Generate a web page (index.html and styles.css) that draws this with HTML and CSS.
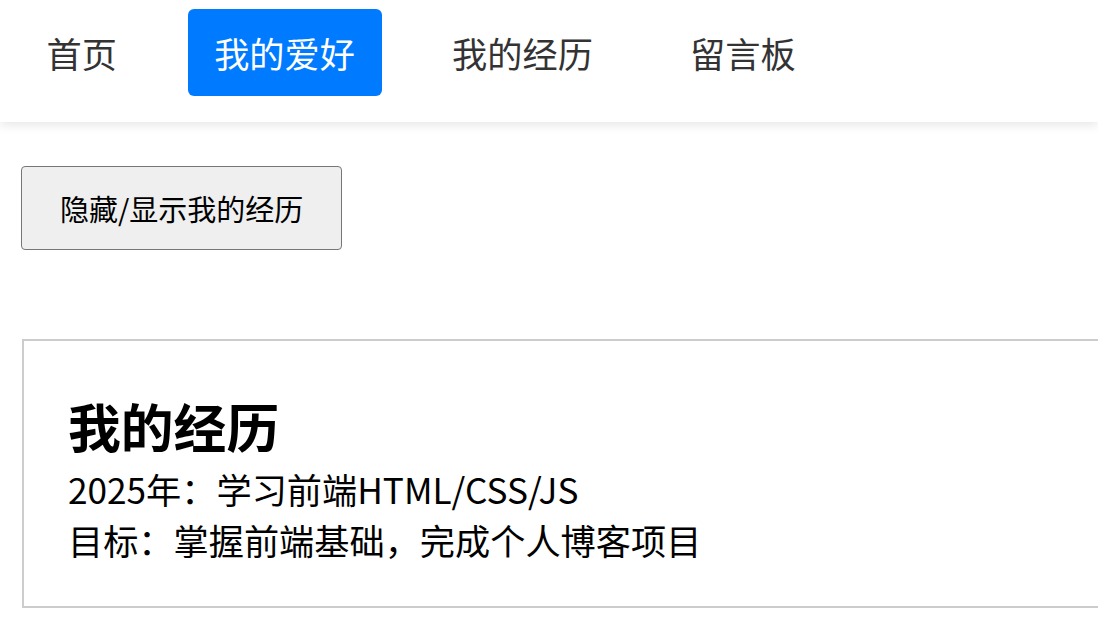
FILE: index.html
```html
<!DOCTYPE html>
<html lang="zh-CN">
<head>
    <meta charset="UTF-8">
    <meta name="viewport" content="width=device-width, initial-scale=1.0">
    <title>我的经历</title>
    <link rel="stylesheet" href="styles.css">
</head>
<body>
    <nav class="nav">
        <a class="nav-item" href="#">首页</a>
        <a class="nav-item active" href="#">我的爱好</a>
        <a class="nav-item" href="#">我的经历</a>
        <a class="nav-item" href="#">留言板</a>
    </nav>

    <main class="content">
        <button class="toggle-btn" id="toggle-btn">隐藏/显示我的经历</button>

        <section class="card" id="exp-card">
            <h2>我的经历</h2>
            <p>2025年：学习前端HTML/CSS/JS</p>
            <p>目标：掌握前端基础，完成个人博客项目</p>
        </section>
    </main>

    <script>
        // 切换经历显示
        document.getElementById('toggle-btn').addEventListener('click', () => {
            const card = document.getElementById('exp-card');
            card.style.display = card.style.display === 'none' ? '' : 'none';
        });
    </script>
</body>
</html>
```

FILE: styles.css
```css
:root {
    --primary-color: #007bff;
    --text-color: #333;
}

body {
    margin: 0;
    overflow: hidden;
    background: #fff;
    font-family: "Noto Sans CJK SC", "Noto Sans", sans-serif;
}

.nav {
    display: flex;
    gap: 44px;
    padding: 9px 20px 26px;
    background: #fff;
    box-shadow: 0 3px 10px rgba(0, 0, 0, 0.1);
}

.nav-item {
    display: block;
    padding: 0 26.6px;
    line-height: 87px;
    font-size: 35.2px;
    color: var(--text-color);
    text-decoration: none;
    border-radius: 6px;
}

.nav-item.active {
    background: var(--primary-color);
    color: #fff;
}

.content {
    padding: 44px 0 0 21px;
}

.toggle-btn {
    display: block;
    padding: 0 38px;
    height: 84px;
    font-family: inherit;
    font-size: 29px;
    color: #000;
    background: #efefef;
    border: 1px solid #767676;
    border-radius: 4px;
    cursor: pointer;
}

.card {
    width: 1120px;
    margin: 89px 0 0 1px;
    padding: 53px 44px 41px;
    border: 2px solid #ccc;
}

.card h2 {
    margin: 0 0 7px;
    font-size: 52.8px;
    line-height: 62px;
    color: #000;
}

.card p {
    margin: 0;
    font-size: 35.2px;
    line-height: 51px;
    color: #000;
}
```
